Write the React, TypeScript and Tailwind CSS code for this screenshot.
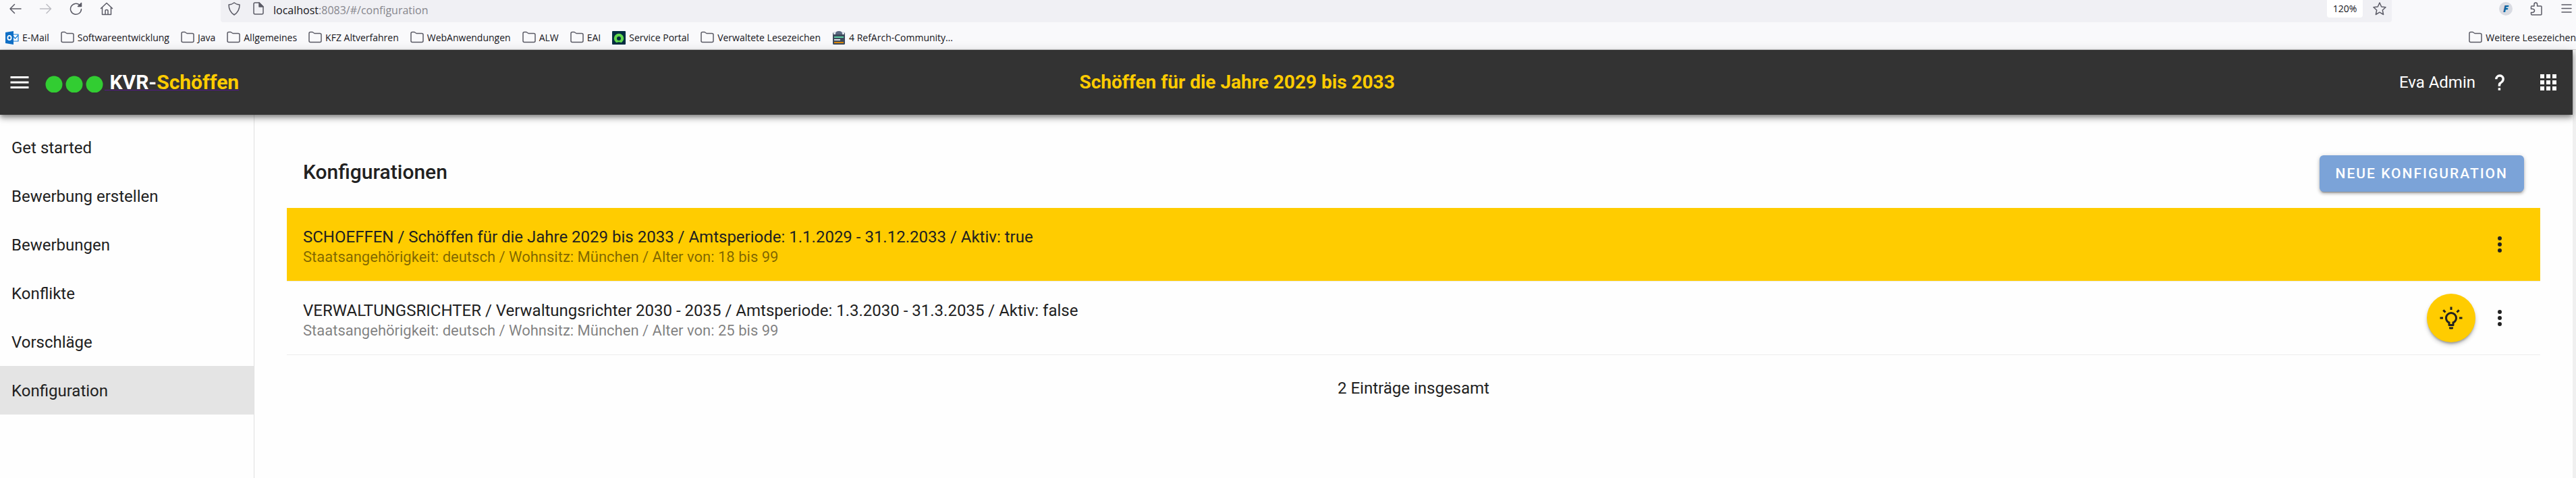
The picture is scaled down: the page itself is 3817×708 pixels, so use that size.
import type { ReactNode, SVGProps } from "react";

function Mdi({ d, ...rest }: { d: string } & SVGProps<SVGSVGElement>) {
  return (
    <svg viewBox="0 0 24 24" width="36" height="36" fill="currentColor" aria-hidden="true" {...rest}>
      <path d={d} />
    </svg>
  );
}

const PATHS = {
  menu: "M3,6H21V8H3V6M3,11H21V13H3V11M3,16H21V18H3V16Z",
  apps: "M16,20H20V16H16M16,14H20V10H16M10,8H14V4H10M16,8H20V4H16M10,14H14V10H10M4,14H8V10H4M4,20H8V16H4M10,20H14V16H10M4,8H8V4H4V8Z",
  help: "M10,19H13V22H10V19M12,2C17.35,2.22 19.68,7.62 16.5,11.67C15.67,12.67 14.33,13.33 13.67,14.17C13,15 13,16 13,17H10C10,15.33 10,13.92 10.67,12.92C11.33,11.92 12.67,11.33 13.5,10.67C15.92,8.43 15.32,5.26 12,5A3,3 0 0,0 9,8H6A6,6 0 0,1 12,2Z",
  dots: "M12,16A2,2 0 0,1 14,18A2,2 0 0,1 12,20A2,2 0 0,1 10,18A2,2 0 0,1 12,16M12,10A2,2 0 0,1 14,12A2,2 0 0,1 12,14A2,2 0 0,1 10,12A2,2 0 0,1 12,10M12,4A2,2 0 0,1 14,6A2,2 0 0,1 12,8A2,2 0 0,1 10,6A2,2 0 0,1 12,4Z",
  bulb: "M20,11H23V13H20V11M1,11H4V13H1V11M13,1V4H11V1H13M4.92,3.5L7.05,5.64L5.63,7.05L3.5,4.93L4.92,3.5M16.95,5.63L19.07,3.5L20.5,4.93L18.37,7.05L16.95,5.63M12,6A6,6 0 0,1 18,12C18,14.22 16.79,16.16 15,17.2V19A1,1 0 0,1 14,20H10A1,1 0 0,1 9,19V17.2C7.21,16.16 6,14.22 6,12A6,6 0 0,1 12,6M14,21V22A1,1 0 0,1 13,23H11A1,1 0 0,1 10,22V21H14M11,18H13V15.87C14.73,15.43 16,13.86 16,12A4,4 0 0,0 12,8A4,4 0 0,0 8,12C8,13.86 9.27,15.43 11,15.87V18Z",
};

function Line({ children }: { children: ReactNode }) {
  return (
    <svg viewBox="0 0 20 20" width="20" height="20" fill="none" stroke="currentColor" strokeWidth="1.5" strokeLinecap="round" strokeLinejoin="round" aria-hidden="true" className="shrink-0">
      {children}
    </svg>
  );
}

function Folder() {
  return (
    <Line>
      <path d="M1 3.5Q1 1.500 3 1.500H6L9 3.500H17Q19 3.500 19 5.500V14.500Q19 16.500 17 16.500H3Q1 16.500 1 14.500Z" />
    </Line>
  );
}

function MailIcon() {
  return (
    <svg viewBox="0 0 20 20" width="20" height="20" aria-hidden="true" className="shrink-0">
      <path d="M10 5H19V15H10Z" fill="#fff" stroke="#0f78d4" strokeWidth="1.200" />
      <path d="M11 7L14.500 11L19 6" fill="none" stroke="#0f78d4" strokeWidth="1.200" />
      <path d="M0 2L12 0V20L0 18Z" fill="#0f6fc6" />
      <ellipse cx="6" cy="10" rx="2.600" ry="3.200" fill="none" stroke="#fff" strokeWidth="1.800" />
    </svg>
  );
}

function PortalIcon() {
  return (
    <svg viewBox="0 0 20 20" width="20" height="20" aria-hidden="true" className="shrink-0">
      <rect width="20" height="20" rx="1" fill="#032d42" />
      <path d="M5.500 16.500A7.200 7.200 0 1 1 14.500 16.500Q13.500 17.500 12.500 16.800Q10 15.500 7.500 16.800Q6.500 17.500 5.500 16.500Z" fill="#62d84e" />
      <circle cx="10" cy="11" r="3" fill="#032d42" />
    </svg>
  );
}

function BoardIcon() {
  return (
    <svg viewBox="0 0 20 20" width="20" height="20" aria-hidden="true" className="shrink-0">
      <rect x="1" y="2" width="18" height="18" rx="1.500" fill="#3d4a5c" />
      <path d="M2 1H18V5H2Z" fill="#dfe3ea" />
      <path d="M5 4Q5 0 10 0T15 4V5H5Z" fill="#5b6880" />
      <path d="M3 8H17V10H3Z" fill="#5fd0a5" />
      <path d="M3 12H12V14H3Z" fill="#d5d9e0" />
      <path d="M3 16H17V18H3Z" fill="#d9860a" />
    </svg>
  );
}

const BOOKMARKS: { label: string; icon: ReactNode }[] = [
  { label: "E-Mail", icon: <MailIcon /> },
  { label: "Softwareentwicklung", icon: <Folder /> },
  { label: "Java", icon: <Folder /> },
  { label: "Allgemeines", icon: <Folder /> },
  { label: "KFZ Altverfahren", icon: <Folder /> },
  { label: "WebAnwendungen", icon: <Folder /> },
  { label: "ALW", icon: <Folder /> },
  { label: "EAI", icon: <Folder /> },
  { label: "Service Portal", icon: <PortalIcon /> },
  { label: "Verwaltete Lesezeichen", icon: <Folder /> },
  { label: "4 RefArch-Community…", icon: <BoardIcon /> },
];

function Bookmark({ label, icon }: { label: string; icon: ReactNode }) {
  return (
    <a href="#" className="flex shrink-0 items-center gap-[5px] text-[#5b5b66]">
      {icon}
      <span className="whitespace-nowrap text-sm leading-5 text-[#15141a]">{label}</span>
    </a>
  );
}

function BrowserChrome() {
  return (
    <div className="flex h-[74px] flex-col border-b border-[#cccccc] bg-[#f9f9fb] font-['Open_Sans','Noto_Sans',sans-serif] text-[#5b5b66]">
      <div className="flex h-[33px] items-start">
        <div className="flex w-[327px] shrink-0 gap-[25px] pl-[13px] pt-[3px]">
          <button type="button" aria-label="Zurück">
            <Line><path d="M18 10H2M8.500 3.500L2 10L8.500 16.500" /></Line>
          </button>
          <button type="button" aria-label="Vor" className="text-[#bcbcc2]">
            <Line><path d="M1.500 10H17.500M11 3.500L17.500 10L11 16.500" /></Line>
          </button>
          <button type="button" aria-label="Neu laden">
            <Line>
              <path d="M17.500 10.500A8 8 0 1 1 15 4.500" />
              <path d="M17.500 1.500V6.500H12.500Z" fill="currentColor" />
            </Line>
          </button>
          <button type="button" aria-label="Startseite">
            <Line>
              <path d="M1.500 9.500L10 1.500L18.500 9.500M3.500 8V18.500H16.500V8M8 18V13Q8 11.500 10 11.500T12 13V18" />
            </Line>
          </button>
        </div>
        <div className="flex h-[33px] min-w-0 grow items-start rounded-b bg-[#f0f0f4] pl-[10px] pr-2">
          <span className="pt-[3px]">
            <Line><path d="M10 1Q13 3.500 18 4Q18 14 10 19Q2 14 2 4Q7 3.500 10 1Z" /></Line>
          </span>
          <span className="pl-4 pt-[3px]">
            <Line>
              <path d="M3 3Q3 1 5 1H11L17 7V16Q17 18 15 18H5Q3 18 3 16Z" />
              <path d="M11 1V7H17Z" fill="currentColor" />
            </Line>
          </span>
          <span className="grow whitespace-nowrap pl-3 pt-1 text-base leading-[22px] text-[#86868d]">
            <span className="text-[#15141a]">localhost</span>:8083/#/configuration
          </span>
          <button type="button" className="h-[26px] w-[53px] rounded-b bg-white text-sm leading-[26px] text-[#15141a]">120%</button>
          <button type="button" aria-label="Lesezeichen hinzufügen" className="ml-[15px] pt-[3px]">
            <Line><path d="M10 1L12.700 7L19 7.700L14.300 12L15.600 18.500L10 15.200L4.400 18.500L5.700 12L1 7.700L7.300 7Z" /></Line>
          </button>
        </div>
        <div className="flex w-[273px] shrink-0 justify-end gap-[25px] pr-1 pt-[3px]">
          <button type="button" aria-label="Erweiterung F" className="size-5 rounded-full bg-[#d9dbe2] text-center text-sm font-extrabold italic leading-5 text-[#0b64a0]">F</button>
          <button type="button" aria-label="Erweiterungen">
            <Line><path d="M3 6H7V3.500Q7 1 9.300 1T11.600 3.500V6H17Q18 6 18 7V18Q18 19 17 19H4Q2.500 19 2.500 17.500V15.500H5Q7.500 15 7.500 12.800T5 10.200H2.500V7" /></Line>
          </button>
          <button type="button" aria-label="Menü">
            <Line><path d="M3 4H17M3 9.500H17M3 15H17" /></Line>
          </button>
        </div>
      </div>
      <div className="flex grow items-center justify-between pl-2 pt-[5px]">
        <div className="flex items-center gap-[17px]">
          {BOOKMARKS.map((b) => (
            <Bookmark key={b.label} {...b} />
          ))}
        </div>
        <Bookmark label="Weitere Lesezeichen" icon={<Folder />} />
      </div>
    </div>
  );
}

const NAV = ["Get started", "Bewerbung erstellen", "Bewerbungen", "Konflikte", "Vorschläge", "Konfiguration"];

const CONFIGS = [
  {
    title: "SCHOEFFEN / Schöffen für die Jahre 2029 bis 2033 / Amtsperiode: 1.1.2029 - 31.12.2033 / Aktiv: true",
    sub: "Staatsangehörigkeit: deutsch / Wohnsitz: München / Alter von: 18 bis 99",
    active: true,
  },
  {
    title: "VERWALTUNGSRICHTER / Verwaltungsrichter 2030 - 2035 / Amtsperiode: 1.3.2030 - 31.3.2035 / Aktiv: false",
    sub: "Staatsangehörigkeit: deutsch / Wohnsitz: München / Alter von: 25 bis 99",
    active: false,
  },
];

function AppBar() {
  return (
    <header className="relative z-10 flex h-24 items-center bg-[#333333] text-white shadow-[0_3px_6px_-1px_rgba(0,0,0,0.3),0_6px_8px_rgba(0,0,0,0.2),0_2px_15px_rgba(0,0,0,0.15)]">
      <div className="flex items-center pl-[11px]">
        <button type="button" aria-label="Navigation">
          <Mdi d={PATHS.menu} />
        </button>
        <a href="#" className="ml-5 flex items-center">
          <svg viewBox="0 0 88 30" width="88" height="30" aria-hidden="true" fill="#32cd32">
            <circle cx="13" cy="18" r="12.500" />
            <circle cx="43" cy="18" r="12.500" />
            <circle cx="73" cy="18" r="12.500" />
          </svg>
          <span className="whitespace-pre text-3xl font-bold leading-9 underline decoration-[#551a8b] decoration-1">
            {" "}KVR-<span className="text-[#ffcc00]">Schöffen</span>
          </span>
        </a>
      </div>
      <h1 className="grow text-center text-[28px] font-bold text-[#ffcc00]">Schöffen für die Jahre 2029 bis 2033</h1>
      <div className="flex w-[500px] items-center justify-end pr-[18px]">
        <span className="text-2xl">Eva Admin</span>
        <button type="button" aria-label="Hilfe" className="ml-[18px] size-9">
          <Mdi d={PATHS.help} width="28" height="28" className="mx-auto" />
        </button>
        <button type="button" aria-label="Anwendungen" className="ml-9">
          <Mdi d={PATHS.apps} />
        </button>
      </div>
    </header>
  );
}

export default function App() {
  return (
    <div className="flex min-h-screen flex-col bg-[#fefefe] font-[Roboto,sans-serif] text-[#212121]">
      <BrowserChrome />
      <div className="flex grow flex-col border-r-[5px] border-[#f0f0f0]">
        <AppBar />
        <div className="flex grow">
          <nav className="w-[377px] shrink-0 border-r border-[#e0e0e0] pt-3">
            <ul>
              {NAV.map((item) => (
                <li key={item}>
                  <a
                    href="#"
                    aria-current={item === "Konfiguration" ? "page" : undefined}
                    className="flex h-[72px] items-center px-[17px] pt-[2px] text-2xl aria-[current=page]:bg-[#e4e4e4]"
                  >
                    {item}
                  </a>
                </li>
              ))}
            </ul>
          </nav>
          <main className="min-w-0 grow px-12 pt-[60px]">
            <div className="flex items-start justify-between px-6 pb-6">
              <h2 className="pt-[7px] text-3xl font-medium leading-9">Konfigurationen</h2>
              <button type="button" className="h-[54px] rounded-md bg-[#7ba3d8] px-6 pt-[2px] text-[21px] font-medium uppercase tracking-[2px] text-white shadow-[0_4px_2px_-3px_rgba(0,0,0,0.3),0_3px_4px_rgba(0,0,0,0.2),0_1px_7px_rgba(0,0,0,0.15)]">
                Neue Konfiguration
              </button>
            </div>
            <ul>
              {CONFIGS.map((c) => (
                <li
                  key={c.title}
                  data-active={c.active}
                  className="flex h-[109px] items-center border-b border-[#ececec] bg-clip-padding pl-6 pr-[42px] data-[active=true]:bg-[#ffcc00]"
                >
                  <div className="min-w-0 grow pt-[5px]">
                    <div className="text-2xl leading-8">{c.title}</div>
                    <div className="text-[22px] leading-7 text-black/50">{c.sub}</div>
                  </div>
                  {!c.active && (
                    <button type="button" aria-label="Aktivieren" className="mr-[18px] grid size-[72px] place-items-center rounded-full bg-[#ffcc00] shadow-[0_3px_3px_-1px_rgba(0,0,0,0.25),0_4px_6px_rgba(0,0,0,0.2)]">
                      <Mdi d={PATHS.bulb} />
                    </button>
                  )}
                  <button type="button" aria-label="Menü öffnen">
                    <Mdi d={PATHS.dots} />
                  </button>
                </li>
              ))}
            </ul>
            <p className="pt-[33px] text-center text-2xl">2 Einträge insgesamt</p>
          </main>
        </div>
      </div>
    </div>
  );
}
